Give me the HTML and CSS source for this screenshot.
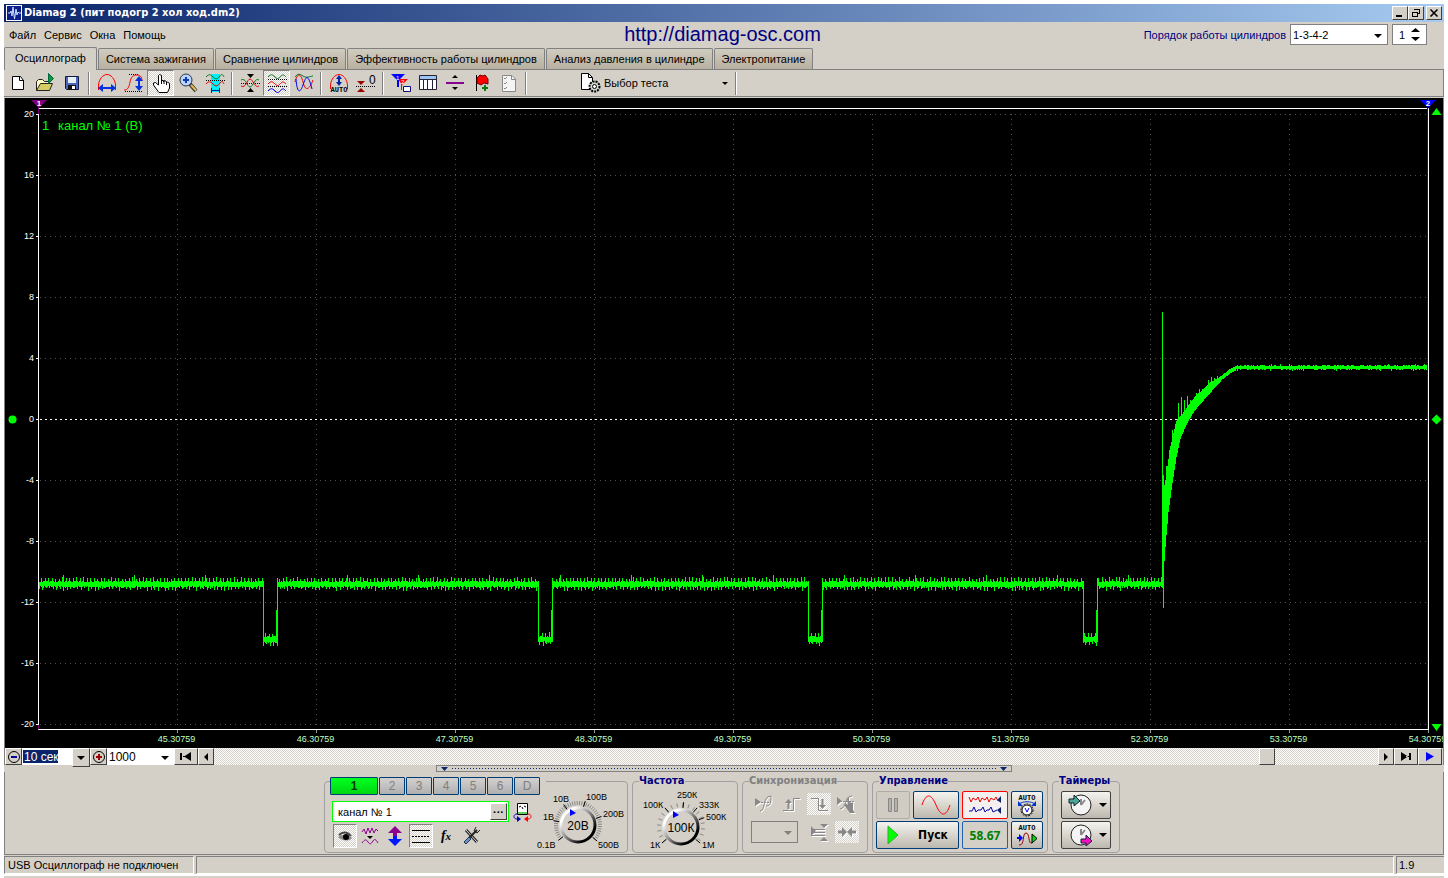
FILE: index.html
```html
<!DOCTYPE html>
<html lang="ru">
<head>
<meta charset="utf-8">
<title>Diamag 2</title>
<link rel="stylesheet" href="styles.css">
</head>
<body>
<div class="app">
  <header class="titlebar">
    <svg class="logo" width="16" height="16" viewBox="0 0 16 16"><rect width="16" height="16" fill="#fff"/><rect x="1" y="1" width="14" height="14" fill="#0a1e8c"/><path d="M2 8H4L5 6L6 11L7 2L8.500 14L10 4L11 10L12 7L13 8H15" fill="none" stroke="#cfe0ff"/></svg>
    <h1 class="title">Diamag 2 (пит подогр 2 хол ход.dm2)</h1>
    <div class="winbtns">
      <button class="winbtn" aria-label="Свернуть"><svg width="12" height="10"><path d="M2 8H8" stroke="#000" stroke-width="2"/></svg></button>
      <button class="winbtn" aria-label="Восстановить"><svg width="12" height="10" shape-rendering="crispEdges"><path d="M4.500 1.500H9.500V5.500H7.500M4 1H10M2.500 4.500H7.500V8.500H2.500ZM2 4H8" fill="none" stroke="#000"/></svg></button>
      <button class="winbtn close" aria-label="Закрыть"><svg width="12" height="10"><path d="M2.500 1.500L9.500 8.500M9.500 1.500L2.500 8.500" stroke="#000" stroke-width="1.600"/></svg></button>
    </div>
  </header>

  <div class="menubar">
    <nav class="menu">
      <button>Файл</button><button>Сервис</button><button>Окна</button><button>Помощь</button>
    </nav>
    <a class="site" href="#">http://diamag-osc.com</a>
    <div class="order">
      <label for="order">Порядок работы цилиндров</label>
      <span class="combo order-combo"><select id="order"><option>1-3-4-2</option></select></span>
      <span class="spin"><input aria-label="Цилиндр" value="1"><svg width="9" height="14"><path d="M0 4L4.500 0L9 4ZM0 9L4.500 13L9 9Z"/></svg></span>
    </div>
  </div>

  <div class="tabs" role="tablist">
    <button class="tab active" role="tab">Осциллограф</button>
    <button class="tab" role="tab">Система зажигания</button>
    <button class="tab" role="tab">Сравнение цилиндров</button>
    <button class="tab" role="tab">Эффективность работы цилиндров</button>
    <button class="tab" role="tab">Анализ давления в цилиндре</button>
    <button class="tab" role="tab">Электропитание</button>
  </div>

  <div class="toolbar">
    <button class="tool" aria-label="Новый"><svg viewBox="0 0 26 24"><path d="M7.500 5.500H15.500L18.500 9.500V18.500H7.500Z" fill="#fff" stroke="#000"/><path d="M14.500 5V9.500H19" fill="none" stroke="#000"/></svg></button>
    <button class="tool" aria-label="Открыть"><svg viewBox="0 0 26 24"><path d="M4.500 19.500V10.500L6.500 8.500H10.500L12.500 10.500H17.500V13" fill="#fffac0" stroke="#222"/><path d="M4.500 19.500L8.500 12.500H20.500L17.500 19.500Z" fill="#d6cc64" stroke="#222"/><path d="M16.500 2.500V12.500L21.500 7.500Z" fill="#0a9a2c" stroke="#064"/></svg></button>
    <button class="tool" aria-label="Сохранить"><svg viewBox="0 0 26 24"><path d="M6.500 5.500H19.500V18.500H7.500L6.500 17.500Z" fill="#4d66b5" stroke="#111a44"/><path d="M9 6H17V12H9Z" fill="#e8eef8"/><path d="M9 14H17V19H9Z" fill="#111"/><path d="M13 15H16V18H13Z" fill="#fff"/></svg></button>
    <i class="sep"></i>
    <button class="tool" aria-label="Ширина"><svg viewBox="0 0 26 24"><path d="M4.500 19V14C5 8 9 3.500 13 3.500S21 8 21.500 14V19" fill="none" stroke="#f00"/><path d="M7 17H19" stroke="#0030e0" stroke-width="2"/><path d="M4 17L9 13V21ZM22 17L17 13V21Z" fill="#0030e0"/></svg></button>
    <button class="tool" aria-label="Высота"><svg viewBox="0 0 26 24"><path d="M8 3.500H18M4 20.500H22" stroke="#000" stroke-dasharray="1 1"/><path d="M3 19C7 19 8 16 9 11S12 4 16 4C20 4 21 7 21 10" fill="none" stroke="#f00"/><path d="M18 8V17" stroke="#0030e0" stroke-width="2"/><path d="M18 5L22 10H14ZM18 20L22 15H14Z" fill="#0030e0"/></svg></button>
    <button class="tool pressed" aria-label="Рука"><svg viewBox="0 0 26 24"><path d="M10.500 21L5.500 14V12L7.500 11.500L10.500 14V4.500L11.500 3.500L13.500 4.500V11V9.500H15.500V11L16.500 9.500L18.500 10.500V12L19.500 11L21.500 12.500V17L19.500 21.500H11Z" fill="#fff" stroke="#000"/><path d="M13.500 10V13M16 10V13M18.500 11V14" stroke="#000"/></svg></button>
    <button class="tool" aria-label="Масштаб"><svg viewBox="0 0 26 24"><path d="M15 13L21 20" stroke="#333" stroke-width="4"/><path d="M16 14L21 19.500" stroke="#e4ba55" stroke-width="2"/><circle cx="11" cy="9" r="6" fill="#b8d4ff" stroke="#334"/><path d="M8 9H14M11 6V12" stroke="#0a3cae" stroke-width="2"/></svg></button>
    <button class="tool" aria-label="Область"><svg viewBox="0 0 26 24"><path d="M9 3H18V21H9Z" fill="#00f0ff"/><path d="M4 6C7 3 8 3 11 6S16 8 18 5S21 4 22 6" fill="none" stroke="#087a20"/><path d="M4 9.500H23" stroke="#000" stroke-dasharray="1 1"/><path d="M4 13C7 10 8 10 11 13S16 15 18 12S21 11 22 13" fill="none" stroke="#d00"/><path d="M10 19.500H17M9.500 17V22M17.500 17V22" stroke="#0020b0" stroke-width="1"/></svg></button>
    <i class="sep"></i>
    <button class="tool" aria-label="Совместить"><svg viewBox="0 0 26 24"><path d="M10 3H17L13.500 7ZM10 21H17L13.500 17Z"/><path d="M4 12.500H23" stroke="#000" stroke-dasharray="1 1"/><path d="M4 9C9 6 10 16 13 16S18 6 22 9" fill="none" stroke="#087a20"/><path d="M4 15C9 18 10 8 13 8S18 18 22 15" fill="none" stroke="#e00"/></svg></button>
    <button class="tool pressed" aria-label="Разделить"><svg viewBox="0 0 26 24"><g fill="none"><path d="M4 6C7 3 8 3 11 6S15 7 17 5S20 4 22 6" stroke="#087a20"/><path d="M4 13C7 10 8 10 11 13S15 14 17 12S20 11 22 13" stroke="#e00"/><path d="M4 20C7 17 8 17 11 20S15 21 17 19S20 18 22 20" stroke="#00e"/><path d="M4 8.500H23M4 15.500H23" stroke="#000" stroke-dasharray="1 1"/></g></svg></button>
    <button class="tool" aria-label="Наложить"><svg viewBox="0 0 26 24"><g fill="none"><path d="M4 6C7 2 9 3 12 5S17 6 22 5" stroke="#087a20"/><path d="M4 11C6 2 10 2 12 11S18 20 22 9" stroke="#e00"/><path d="M5 8C6 22 9 23 12 14S17 2 21 18" stroke="#00e"/></g></svg></button>
    <i class="sep"></i>
    <button class="tool" aria-label="Автоуровень"><svg viewBox="0 0 26 24"><path d="M4.500 18V14C5 8 9 3.500 13 3.500S21 8 21.500 14V18" fill="none" stroke="#f00"/><path d="M13 6V13" stroke="#0020b0" stroke-width="2"/><path d="M13 4L16 8H10ZM13 15L16 11H10Z" fill="#0020b0"/><text x="13" y="21" text-anchor="middle" class="auto">AUTO</text></svg></button>
    <button class="tool" aria-label="Ноль"><svg viewBox="0 0 26 24"><path d="M4 10H12L8 14ZM4 21H12L8 17Z" fill="#900"/><path d="M3 15.500H23" stroke="#000" stroke-dasharray="1 1"/><text x="16" y="13" font-size="12">0</text></svg></button>
    <i class="sep"></i>
    <button class="tool" aria-label="Маркеры"><svg viewBox="0 0 26 24"><path d="M10 8H20L14 14Z" fill="#f00"/><path d="M3 3H17L10 10Z" fill="#00f"/><path d="M10 4V16" stroke="#00f" stroke-width="2"/><path d="M13.500 12V19" stroke="#f00"/><text x="8" y="9" font-size="6" fill="#fff">1</text><text x="13" y="13" font-size="6" fill="#fff">2</text><path d="M15.500 15.500H22.500V20.500H15.500Z" fill="#fff" stroke="#0a0a80"/></svg></button>
    <button class="tool" aria-label="Таблица"><svg viewBox="0 0 26 24"><path d="M4.500 4.500H21.500V18.500H4.500Z" fill="#fff" stroke="#223"/><path d="M5 5H21V8H5Z" fill="#9cc4f4"/><path d="M4 8.500H22M8.500 8V18M12.500 8V18M17.500 8V18" stroke="#223"/></svg></button>
    <button class="tool" aria-label="Раздвинуть"><svg viewBox="0 0 26 24"><path d="M13 4L16 7H10ZM13 19L16 16H10Z"/><path d="M4 12H22" stroke="#8a0090" stroke-width="2"/></svg></button>
    <button class="tool" aria-label="Флаг"><svg viewBox="0 0 26 24"><path d="M7.500 4V20" stroke="#000" stroke-width="1"/><path d="M8 7L11 4L14 5L16 4L19 8V13L15 12L12 14L8 12Z" fill="#f00" stroke="#600"/><path d="M16 14V20M13 17H19" stroke="#087a10" stroke-width="2"/></svg></button>
    <button class="tool" aria-label="Список"><svg viewBox="0 0 26 24"><path d="M6.500 4.500H16L19.500 8V20.500H6.500Z" fill="#f4f4f4" stroke="#888"/><path d="M15.500 5V8.500H19M8 7L9 8L11 6M8 12L9 13L11 11M8 17L9 18L11 16" fill="none" stroke="#888"/></svg></button>
    <i class="sep"></i>
    <button class="test">
      <svg width="22" height="22" viewBox="0 0 22 22"><path d="M1.500 1.500H8.500L12.500 5.500V17.500H1.500Z" fill="#fff" stroke="#000"/><path d="M8.500 1.500V5.500H12.500" fill="none" stroke="#000"/><circle cx="14.500" cy="14.500" r="5" fill="#d4dcd4" stroke="#000" stroke-width="2" stroke-dasharray="2 1"/><circle cx="14.500" cy="14.500" r="2" fill="#fff" stroke="#000"/></svg>
      <span>Выбор теста</span>
      <i class="down"></i>
    </button>
    <i class="sep"></i>
  </div>

  <main class="scope" id="scope" aria-label="Осциллограмма"></main>

  <div class="scrollrow">
    <button class="sbtn s17" aria-label="Уменьшить"><svg width="14" height="14"><circle cx="7" cy="7" r="5.500" fill="none" stroke="#000"/><path d="M4 7H10" stroke="#00009a" stroke-width="2"/></svg></button>
    <span class="combo raised"><select class="period" aria-label="Развёртка"><option>10 сек</option></select></span>
    <button class="sbtn s17" aria-label="Увеличить"><svg width="14" height="14"><circle cx="7" cy="7" r="5.500" fill="none" stroke="#000"/><path d="M4 7H10M7 4V10" stroke="#a00000" stroke-width="2"/></svg></button>
    <span class="combo flat"><select aria-label="Точек"><option>1000</option></select></span>
    <button class="sbtn s24" aria-label="В начало"><svg width="14" height="9"><path d="M2 1V8" stroke="#000" stroke-width="2"/><path d="M12 0V9L5 4.500ZM4 4H7V5H4Z"/></svg></button>
    <button class="sbtn s16" aria-label="Назад"><svg width="6" height="8"><path d="M5 0V8L1 4Z"/></svg></button>
    <div class="track"><button class="thumb" aria-label="Прокрутка"></button></div>
    <button class="sbtn s16" aria-label="Вперёд"><svg width="6" height="8"><path d="M1 0V8L5 4Z"/></svg></button>
    <button class="sbtn s24" aria-label="В конец"><svg width="14" height="9"><path d="M11 1V8" stroke="#000" stroke-width="2"/><path d="M2 0V9L9 4.500ZM7 4H10V5H7Z"/></svg></button>
    <button class="sbtn s24" aria-label="Воспроизвести"><svg width="10" height="9"><path d="M1 0V9L9 4.500Z" fill="#00f"/></svg></button>
  </div>

  <div class="splitter"><svg width="9" height="4"><path d="M1 0H8L4.500 4Z" fill="#0a246a"/></svg><i></i><svg width="9" height="4"><path d="M1 0H8L4.500 4Z" fill="#0a246a"/></svg></div>

  <section class="panel">
    <div class="box channel">
      <div class="channel-main">
        <div class="chans">
          <button class="chan on">1</button><button class="chan">2</button><button class="chan">3</button><button class="chan">4</button><button class="chan">5</button><button class="chan">6</button><button class="chan">D</button>
        </div>
        <div class="namerow">
          <div class="name"><input aria-label="Имя канала" value="канал № 1"><button class="more" aria-label="Выбрать">···</button></div>
          <button class="plain" aria-label="Датчик"><svg width="20" height="20" viewBox="0 0 20 20"><path d="M4.500 1.500H14.500V12.500H4.500Z" fill="#fff" stroke="#000"/><path d="M5 10H14V12H5Z" fill="#60d060"/><path d="M6 5L8 4M10 7L9 5M11 4L13 5" stroke="#000"/><path d="M4 12C0 12 0 17 4 17" fill="none" stroke="#00a"/><path d="M4 14V20L8 17Z" fill="#00a"/><path d="M15 12C19 12 19 17 15 17" fill="none" stroke="#f00"/><path d="M15 14V20L11 17Z" fill="#f00"/></svg></button>
        </div>
        <div class="opts">
          <button class="opt pressed" aria-label="Видимость"><svg width="22" height="20"><path d="M5 9C9 5 14 6 17 10" fill="none" stroke="#444" stroke-width="2"/><path d="M4 11C8 8 14 8 18 12C14 16 8 15 4 11Z" fill="#888"/><circle cx="12" cy="11" r="3"/></svg></button>
          <button class="opt" aria-label="Фильтр"><svg width="22" height="20"><path d="M3 6L5 3L7 8L9 2L11 7L13 2L15 7L17 3L19 5M3 17C6 13 7 13 9 16S12 18 14 15S17 14 19 17" fill="none" stroke="#900090"/><path d="M8 10H14L11 13Z"/></svg></button>
          <button class="opt" aria-label="Сдвиг"><svg width="22" height="20"><path d="M11 0L18 7H13V10H9V7H4Z" fill="#900090"/><path d="M11 20L18 13H13V10H9V13H4Z" fill="#0018ff"/></svg></button>
          <button class="opt pressed" aria-label="Уровни"><svg width="22" height="20"><path d="M2 4.500H20M2 16.500H20" stroke="#000"/><path d="M2 10.500H20" stroke="#000" stroke-dasharray="2 1"/></svg></button>
          <button class="opt fx" aria-label="Функция">f<small>x</small></button>
          <button class="opt" aria-label="Настройка"><svg width="22" height="20"><path d="M6 4L17 16" stroke="#222" stroke-width="3"/><path d="M6 4L17 16" stroke="#ddd"/><path d="M17 4L8 13" stroke="#222" stroke-width="2"/><path d="M4 16L9 11L11 13L6 18Z" fill="#6b94d8" stroke="#234"/><path d="M16 1L14 5L17 7L20 4" fill="none" stroke="#222"/></svg></button>
        </div>
      </div>
      <svg class="knob" id="knob-volt" width="90" height="68"></svg>
    </div>

    <fieldset class="box freq"><legend>Частота</legend><svg class="knob" id="knob-freq" width="98" height="66"></svg></fieldset>

    <fieldset class="box sync" disabled><legend>Синхронизация</legend>
      <div class="syncgrid">
        <button class="mini" aria-label="Уровень"><svg width="24" height="22"><path d="M4 5L10 9L4 13Z" fill="#888"/><path d="M4 9.500H20" stroke="#888" stroke-dasharray="2 1"/><path d="M9 18C15 18 11 3 20 3C20 10 19 13 15 13" fill="none" stroke="#888"/></svg></button>
        <button class="mini" aria-label="Фронт"><svg width="24" height="22"><path d="M4 17.500H14.500V5.500H21" fill="none" stroke="#888"/><path d="M9.500 9V16" stroke="#888" stroke-width="2"/><path d="M6 10L9.500 6L13 10Z" fill="#888"/></svg></button>
        <button class="mini lit" aria-label="Спад"><svg width="24" height="22"><path d="M4 5.500H11.500V17.500H21" fill="none" stroke="#888"/><path d="M15.500 6V13" stroke="#888" stroke-width="2"/><path d="M12 12L15.500 16L19 12Z" fill="#888"/></svg></button>
        <button class="mini" aria-label="Ручной"><svg width="24" height="22"><path d="M2 4L7 8L2 12Z" fill="#888"/><path d="M2 8.500H20" stroke="#888" stroke-dasharray="2 1"/><path d="M5 16C12 15 9 3 17 3" fill="none" stroke="#888"/><path d="M12 5L14 4V9L18 10V17L20 20H15L10 13V10L13 12Z" fill="#888"/></svg></button>
        <span class="combo sync-combo"><select aria-label="Канал синхронизации"><option></option></select></span>
        <button class="mini" aria-label="Окно"><svg width="24" height="22"><path d="M4 8.500H18M4 11.500H18M4 14.500H18" stroke="#888"/><path d="M4 5L9 10L4 15ZM13 3H21L17 7ZM13 20H21L17 16Z" fill="#888"/></svg></button>
        <button class="mini lit" aria-label="Сжать"><svg width="24" height="22"><path d="M3 11H9M15 11H21" stroke="#888" stroke-width="3"/><path d="M7 6V16L12 11ZM17 6V16L12 11Z" fill="#888"/></svg></button>
      </div>
    </fieldset>

    <fieldset class="box control"><legend>Управление</legend>
      <div class="ctlgrid">
        <button class="big off" aria-label="Пауза"><svg width="14" height="16"><path d="M2.500 1.500H5.500V14.500H2.500ZM8.500 1.500H11.500V14.500H8.500Z" fill="#b4b2ac" stroke="#888"/></svg></button>
        <button class="big" aria-label="Однократно"><svg width="30" height="20"><path d="M1 10C5 -2 10 -2 15 10S25 22 29 10" fill="none" stroke="#f00"/></svg></button>
        <button class="big red" aria-label="Непрерывно"><svg width="34" height="20"><path d="M1 2L3 7L5 3L8 5L10 2L12 7L14 3L17 5L19 2L21 7L23 3L26 5L28 2L30 6" fill="none" stroke="#e00"/><path d="M1 16H4L6 12L8 17L10 15H13L15 12L17 17L19 15H21L23 12L25 17L29 15" fill="none" stroke="#00a"/><path d="M33 1V8L29 5ZM33 12V19L29 15Z" fill="#0a246a"/></svg></button>
        <button class="big" aria-label="Авто напряжение"><svg width="24" height="24"><text x="12" y="7" text-anchor="middle" class="auto">AUTO</text><path d="M4 11C8 8 16 8 20 11" fill="none" stroke="#03c"/><path d="M3 8V13H8ZM21 8V13H16Z" fill="#03c"/><circle cx="12" cy="17" r="6" fill="#fff" stroke="#000" stroke-dasharray="2 1"/><circle cx="12" cy="17" r="5" fill="#fff" stroke="#000"/><path d="M10 15L12 19L14 15" fill="none" stroke="#00f"/></svg></button>
        <button class="big start"><svg width="12" height="20"><path d="M1 1L11 10L1 19Z" fill="#0f0" stroke="#3a3"/></svg><span>Пуск</span></button>
        <output class="big value">58.67</output>
        <button class="big" aria-label="Авто запуск"><svg width="24" height="24"><text x="12" y="7" text-anchor="middle" class="auto">AUTO</text><path d="M2 15H5" stroke="#00f" stroke-width="2"/><path d="M4 11V19L8 15Z" fill="#00f"/><path d="M4 22C10 23 7 10 11 10S13 22 17 20" fill="none" stroke="#900"/><path d="M17 11V20L22 15.500Z" fill="#0d0" stroke="#000"/></svg></button>
      </div>
    </fieldset>

    <fieldset class="box timers"><legend>Таймеры</legend>
      <div class="timergrid">
        <button class="big" aria-label="Таймер запуска"><svg width="28" height="24"><circle cx="15" cy="12" r="10" fill="#f4f4f4" stroke="#222"/><path d="M15 12V6M15 12L19 7" stroke="#888" stroke-width="2"/><path d="M3 6H8V2L14 8L8 13V10H3Z" fill="#4aa596" stroke="#123"/></svg><i class="down"></i></button>
        <button class="big" aria-label="Таймер остановки"><svg width="28" height="24"><circle cx="15" cy="12" r="10" fill="#f4f4f4" stroke="#222"/><path d="M15 12V6M15 12L19 7" stroke="#888" stroke-width="2"/><path d="M15 16H20V12L26 18L20 23V20H15Z" fill="#f010c0" stroke="#123"/></svg><i class="down"></i></button>
      </div>
    </fieldset>
  </section>

  <footer class="status"><span class="cell first">USB Осциллограф не подключен</span><span class="cell mid"></span><span class="cell last">1.9</span></footer>
</div>
<script src="scope.js"></script>
</body>
</html>
```

FILE: styles.css
```css
* { box-sizing: border-box; }
html, body { height: 100%; }
body { margin: 0; background: #fff; color: #000; font: 11px/14px "Liberation Sans", Arial, sans-serif; }
button, input, select { font: inherit; color: inherit; margin: 0; padding: 0; border: 0; background: none; border-radius: 0; outline: 0; }
button { display: flex; align-items: center; justify-content: center; white-space: nowrap; }
svg { display: block; flex: none; overflow: visible; }
svg.logo { overflow: hidden; }

.app { display: flex; flex-direction: column; min-height: 100%; padding: 4px 4px 0; background: #d4d0c8 content-box; }

.titlebar { display: flex; align-items: center; gap: 2px; height: 18px; padding: 0 2px; background: linear-gradient(90deg, #0a246a, #a6caf0); }
.title { flex: 1; margin: 0; font: 700 11px/18px "DejaVu Sans Condensed", "DejaVu Sans", sans-serif; color: #fff; }
.winbtns { display: flex; }
.winbtn { width: 16px; height: 14px; background: #d4d0c8; border: 1px solid; border-color: #fff #404040 #404040 #fff; }
.close { margin-left: 2px; }

.menubar { display: grid; grid-template-columns: 1fr auto 1fr; align-items: center; height: 25px; padding-right: 17px; }
.menu { display: flex; gap: 8px; padding-left: 5px; }
.site { padding-left: 14px; font: 20px/25px "Liberation Sans", Arial, sans-serif; color: #000080; text-decoration: none; }
.order { display: flex; align-items: center; justify-content: flex-end; gap: 4px; color: #000080; }
.combo { position: relative; display: block; color: #000; background: #fff; }
.combo select { appearance: none; width: 100%; height: 100%; padding-left: 2px; }
.combo::after { content: ""; position: absolute; right: 5px; top: 50%; margin-top: -1px; border: solid transparent; border-width: 4px 4px 0; border-top-color: #000; pointer-events: none; }
.order-combo { width: 98px; height: 21px; border: 1px solid #808080; }
.spin { display: flex; align-items: center; width: 35px; height: 21px; padding: 0 6px; background: #fff; border: 1px solid #808080; color: #000; }
.spin input { flex: 1; width: 0; }

.tabs { display: flex; align-items: flex-end; gap: 1px; height: 23px; border-bottom: 1px solid #808080; }
.tab { height: 21px; padding: 0 7px; border: 1px solid #808080; border-bottom: 0; border-radius: 2px 2px 0 0; background: linear-gradient(#d0ccc0, #b8b0a0); }
.tab.active { height: 23px; margin-bottom: -1px; padding: 0 10px 2px; background: #d4d0c8; }

.toolbar { display: flex; align-items: center; height: 27px; border-bottom: 1px solid #808080; border-right: 1px solid #808080; }
.tool { width: 27px; height: 26px; }
.tool svg { width: 26px; height: 24px; }
.pressed, .lit, .track { background: repeating-conic-gradient(#fff 0 25%, #d4d0c8 0 50%) 0 0 / 2px 2px; }
.pressed { border: 1px solid; border-color: #808080 #fff #fff #808080; }
.sep { flex: none; width: 8px; height: 23px; border-left: 3px solid transparent; background: linear-gradient(90deg, #808080 1px, #fff 1px 2px, transparent 2px) no-repeat; }
.auto { font: 700 7px "Liberation Mono", monospace; }
.test { width: 202px; gap: 2px; padding: 0 4px 0 50px; justify-content: flex-start; }
.test span { flex: 1; text-align: left; }
.down { border: solid transparent; border-width: 4px 4px 0; border-top-color: #000; }
.test .down { border-width: 3px 3px 0; }

.scope { flex: 1 0 400px; min-height: 400px; margin-top: 1px; background: #000; border-left: 1px solid #808080; border-right: 1px solid #808080; overflow: hidden; }
.scope svg { font: 9px "Liberation Sans", Arial, sans-serif; overflow: hidden; }
.scope .y { fill: #fff; text-anchor: end; }
.scope .x { fill: #c0ffc0; text-anchor: middle; }
.scope .ch { font-size: 13px; fill: #0f0; }
.scope .mark { font-size: 8px; font-weight: 700; fill: #fff; text-anchor: middle; }

.scrollrow { display: flex; height: 17px; padding-right: 1px; border-right: 1px solid #808080; border-left: 1px solid #808080; }
.sbtn, .thumb, .more { flex: none; background: #d4d0c8; border: 1px solid; border-color: #fff #404040 #404040 #fff; }
.s16 { width: 16px; }
.s17 { width: 17px; }
.s24 { width: 24px; }
.scrollrow .combo { width: 67px; font-size: 12px; }
.scrollrow .raised { width: 68px; }
.scrollrow .raised::before { content: ""; position: absolute; right: 0; top: 0; width: 16px; height: 17px; background: #d4d0c8; border: 1px solid; border-color: #fff #404040 #404040 #fff; pointer-events: none; }
.scrollrow .combo select.period { color: #fff; background: linear-gradient(#0a246a, #0a246a) no-repeat 1px 2px / 35px 13px; }
.track { flex: 1; display: flex; justify-content: flex-end; padding-right: 103px; }
.thumb { width: 16px; }

.splitter { display: flex; align-items: center; align-self: center; width: 40%; height: 7px; padding: 0 3px; border: 1px solid #808080; }
.splitter i { flex: 1; height: 1px; margin: 0 3px; background: repeating-linear-gradient(90deg, #0a246a 0 1px, transparent 1px 3px); }

.panel { display: flex; justify-content: center; align-items: flex-end; gap: 4px; padding: 3px 4px 1px 0; border-bottom: 1px solid #808080; border-right: 1px solid #808080; border-left: 1px solid #808080; }
.box { flex: none; margin: 0; padding: 0; min-width: 0; border: 1px solid #a0a0a0; border-radius: 4px; }
.box legend { margin-left: 6px; padding: 0; font: 700 11px/12px "DejaVu Sans Condensed", "DejaVu Sans", sans-serif; color: #000080; }
.channel { display: flex; align-items: flex-end; width: 304px; height: 72px; padding: 0 3px 0 5px; }
.channel-main { flex: none; width: 206px; align-self: flex-start; margin-top: -5px; }
.chans { display: flex; gap: 1px; width: 216px; height: 20px; background: #d4d0c8; }
.chan { width: 26px; height: 18px; border: 1px solid #003c74; border-radius: 1px; color: #808080; background: linear-gradient(#d4d0d0, #b0b0b0); font: 12px "Liberation Sans", Arial, sans-serif; }
.chan.on { width: 48px; color: #003c00; font-weight: 700; background: linear-gradient(#00ff20, #00d810); }
.namerow { display: flex; align-items: center; gap: 4px; margin: 4px 0 2px 2px; }
.name { display: flex; flex: none; width: 177px; height: 21px; padding: 1px; background: #fff; border: 1px solid #0f0; }
.name input { flex: 1; width: 0; padding-left: 4px; }
.more { width: 17px; font-weight: 700; }
.opts { display: flex; gap: 1px; margin-left: 3px; }
.opt { width: 24px; height: 24px; }
.opt:nth-child(4) { margin-left: 1px; }
.fx { font: italic 700 14px "Liberation Serif", serif; }
.fx small { font-size: 11px; }
.knob { font: 9px "Liberation Sans", Arial, sans-serif; }
.knob .big-label { font-size: 12px; text-anchor: middle; }

.freq { width: 106px; height: 78px; }
.freq .knob { margin: 1px 0 0 2px; }
.sync { width: 126px; height: 78px; }
.box.sync legend { color: #808080; }
.syncgrid { display: grid; grid-template-columns: repeat(4, 24px); gap: 6px 4px; padding: 6px 0 0 8px; }
.mini { width: 24px; height: 22px; }
.mini svg { filter: drop-shadow(1px 1px 0 #fff); }
.sync-combo { grid-column: span 2; width: 47px; height: 22px; border: 1px solid #808080; background: none; }
.sync-combo::after { border-top-color: #808080; }
.control { width: 176px; height: 78px; }
.ctlgrid { display: grid; grid-template-columns: 34px 46px 46px 32px; gap: 2px 3px; padding: 4px 0 0 3px; }
.big { height: 28px; display: flex; align-items: center; justify-content: center; border: 1px solid #003c74; border-radius: 2px; background: linear-gradient(#f4f3ef, #d4d0c8 60%, #bcb8b0); }
.off { border-color: #b0aca4; background: #d0ccc4; }
.red { border: 1px solid #f00; background: #f4f0f0; }
.start { grid-column: span 2; gap: 19px; font: 700 12px "DejaVu Sans Condensed", "DejaVu Sans", sans-serif; }
.value { border-color: #2060b0; background: #d4d0c8; color: #008000; font: 700 12px "Noto Sans", sans-serif; }
.timers { width: 68px; height: 78px; }
.timergrid { display: grid; gap: 2px; padding: 4px 8px 0; }
.timers .big { gap: 5px; border-color: #404040; }

.status { display: flex; gap: 2px; height: 18px; margin: 1px 0 4px; box-shadow: 0 2px #fff; }
.cell { padding: 1px 3px; border: 1px solid; border-color: #808080 #fff #fff #808080; }
.first { width: 190px; white-space: nowrap; }
.mid { flex: 1; }
.last { width: 48px; padding-left: 2px; border-right: 0; }
```

FILE: scope.js
```js
const scope = document.getElementById('scope');

function noise(seed) {
  let s = seed;
  return () => (s = (s * 16807) % 2147483647) / 2147483647;
}

function lerp(points, x) {
  for (let i = 1; i < points.length; i++) {
    if (x <= points[i][0]) {
      const [x0, y0] = points[i - 1], [x1, y1] = points[i];
      return y0 + (y1 - y0) * (x - x0) / (x1 - x0);
    }
  }
  return points[points.length - 1][1];
}

// Time is 0..1390 across the screen, level is in volts.
const DROPS = [[225, 239], [500, 514], [770, 784], [1045, 1059]];
const START = 1124;
const LOW = [[1124, -11], [1127, -8.3], [1130, -6], [1134, -4.1], [1138, -2.4], [1142, -1.2], [1147, -0.4], [1152, 0.2], [1157, 0.7], [1162, 1.1], [1169, 1.6], [1177, 2.2], [1184, 2.7], [1192, 3.1], [1198, 3.3]];
const HIGH = [[1124, -5], [1127, -4], [1129, -3.1], [1131, -2.1], [1134, -1.2], [1138, -0.1], [1142, 0.2], [1147, 0.6], [1152, 1.1], [1157, 1.5], [1162, 1.8], [1172, 2.4], [1182, 2.8], [1192, 3.3], [1198, 3.5]];

function trace(px, py, width) {
  const rnd = noise(77);
  let d = '';
  for (let i = 1; i < width - 1; i++) {
    const t = i * 1390 / width;
    let hi, lo;
    if (t < START) {
      const drop = DROPS.find(([a, b]) => t >= a && t <= b);
      const base = drop ? -14.45 : -10.83;
      hi = base + 0.13 + rnd() * 0.1;
      lo = base - 0.13 - rnd() * 0.1;
      if (i % 7 === 0 || i % 7 === 3) hi = base + 0.35 + rnd() * 0.12;
      if (i % 7 === 1 || i % 7 === 4) lo = base - 0.25 - rnd() * 0.2;
      if (!drop && i % 71 === 25) hi = base + 0.6;
      if (drop && t - drop[0] < 1) hi = -10.6;
      if (drop && drop[1] - t < 2) hi = drop[1] - t < 1 ? -10.4 : -12.5;
    } else if (t < 1198) {
      hi = lerp(HIGH, t);
      lo = lerp(LOW, t) - 0.1;
      if (i % 3 === 0 && t < 1185) hi += rnd() * (t < 1160 ? 1.2 : 0.3);
      if (t < START + 1) hi = 7;
      else if (t < START + 2) lo = -12.4;
    } else {
      hi = 3.48 + (rnd() > 0.6 ? 0.07 : 0) + (i % 9 === 0 ? 0.06 : 0);
      lo = 3.26 - (rnd() > 0.7 ? 0.07 : 0) - (i % 11 === 0 ? 0.06 : 0);
    }
    d += `M${px + i + 0.5} ${py(hi).toFixed(1)}V${py(lo).toFixed(1)}`;
  }
  return d;
}

function draw() {
  const w = scope.clientWidth, h = scope.clientHeight;
  const left = 33, right = w - 15, top = 10, bottom = h - 19;
  const y20 = top + 6, yStep = (bottom - 5 - y20) / 10, xStep = (right - left) / 10;
  const py = v => y20 + (20 - v) / 4 * yStep;
  const zero = Math.round(py(0)) + 0.5;
  let s = `<svg width="${w}" height="${h}" viewBox="0 0 ${w} ${h}">`;
  for (let i = 0; i <= 10; i++) {
    const y = Math.round(y20 + i * yStep) + 0.5;
    if (i !== 5) s += `<path d="M${left + 2} ${y}H${right}" stroke="#505050" stroke-dasharray="1 4"/>`;
    s += `<path d="M${left - 2} ${y}H${left}" stroke="#fff"/><text class="y" x="${left - 4}" y="${y + 2.5}">${20 - i * 4}</text>`;
    if (i > 0) {
      const x = Math.round(left + i * xStep) + 0.5;
      if (i < 10) s += `<path d="M${x} ${y20}V${bottom}" stroke="#505050" stroke-dasharray="1 4"/>`;
      s += `<path d="M${x} ${bottom}V${bottom + 4}" stroke="#999"/><text class="x" x="${x - 1}" y="${bottom + 13}">${44 + i}.30759</text>`;
    }
  }
  s += `<path d="M${left + 2} ${zero}H${right}" stroke="#fff" stroke-dasharray="2 3"/>`;
  s += `<path d="${trace(left, py, right - left)}" stroke="#0f0" shape-rendering="crispEdges"/>`;
  s += `<path d="M${left + 0.5} ${top + 0.5}H${right + 0.5}V${bottom + 0.5}H${left + 0.5}Z" fill="none" stroke="#fff"/>`;
  s += `<path d="M${right - 0.5} ${top}V${bottom}" stroke="#00f"/>`;
  s += `<path d="M${left - 7} 2H${left + 9}L${left + 1} 10Z" fill="#800080"/><path d="M${left + 0.5} 8V16M${left + 0.5} ${bottom - 4}V${bottom}" stroke="#800080"/><text class="mark" x="${left + 1}" y="8">1</text>`;
  s += `<path d="M${right - 8} 2H${right + 8}L${right} 10Z" fill="#00f"/><text class="mark" x="${right}" y="8">2</text>`;
  const gx = right + 8.5;
  s += `<g fill="#0f0"><path d="M${gx - 5} 17L${gx} 10L${gx + 5} 17ZM${gx - 5} ${bottom - 5}H${gx + 5}L${gx} ${bottom + 2}Z"/>`;
  s += `<path d="M${gx - 5} ${zero}L${gx} ${zero - 5}L${gx + 5} ${zero}L${gx} ${zero + 5}Z"/><circle cx="7.5" cy="${zero}" r="4"/></g>`;
  s += `<text class="ch" x="37" y="32">1</text><text class="ch" x="53" y="32">канал № 1 (В)</text></svg>`;
  scope.innerHTML = s;
}

function knob(id, cx, cy, label, marks, from, to, step) {
  let s = `<defs><linearGradient id="${id}-g" x1="0" y1="0" x2="1" y2="1"><stop offset="0.200" stop-color="#fff"/><stop offset="0.500" stop-color="#888"/><stop offset="0.800" stop-color="#000"/></linearGradient></defs>`;
  for (let a = from; a <= to; a += step) {
    const r = a * Math.PI / 180, c = Math.cos(r), n = Math.sin(r);
    s += `<path d="M${cx + 20 * c} ${cy + 20 * n}L${cx + 24 * c} ${cy + 24 * n}" stroke="#888"/>`;
  }
  for (const [text, x, y, a] of marks) {
    const r = a * Math.PI / 180, c = Math.cos(r), n = Math.sin(r);
    s += `<path d="M${cx + 19 * c} ${cy + 19 * n}L${cx + 25 * c} ${cy + 25 * n}" stroke="#000"/><text x="${x}" y="${y}">${text}</text>`;
  }
  s += `<circle cx="${cx}" cy="${cy}" r="17" fill="#d4d0c8" stroke="url(#${id}-g)" stroke-width="3"/>`;
  s += `<path d="M${cx - 8} ${cy - 16}L${cx - 2} ${cy - 12}L${cx - 8} ${cy - 9}Z" fill="#00f"/>`;
  s += `<text class="big-label" x="${cx}" y="${cy + 5}">${label}</text>`;
  document.getElementById(id).innerHTML = s;
}

knob('knob-volt', 42, 41, '20В', [['10В', 17, 18, 235], ['100В', 50, 16, 287], ['200В', 67, 33, 340], ['1В', 7, 36, 190], ['0.1В', 1, 64, 142], ['500В', 62, 64, 40]], 142, 400, 6);
knob('knob-freq', 46, 39, '100К', [['250К', 42, 10, 276], ['100К', 8, 20, 230], ['333К', 64, 20, 310], ['500К', 71, 32, 338], ['1К', 15, 60, 140], ['1М', 67, 60, 40]], 140, 400, 15);
draw();
window.addEventListener('resize', draw);
```
